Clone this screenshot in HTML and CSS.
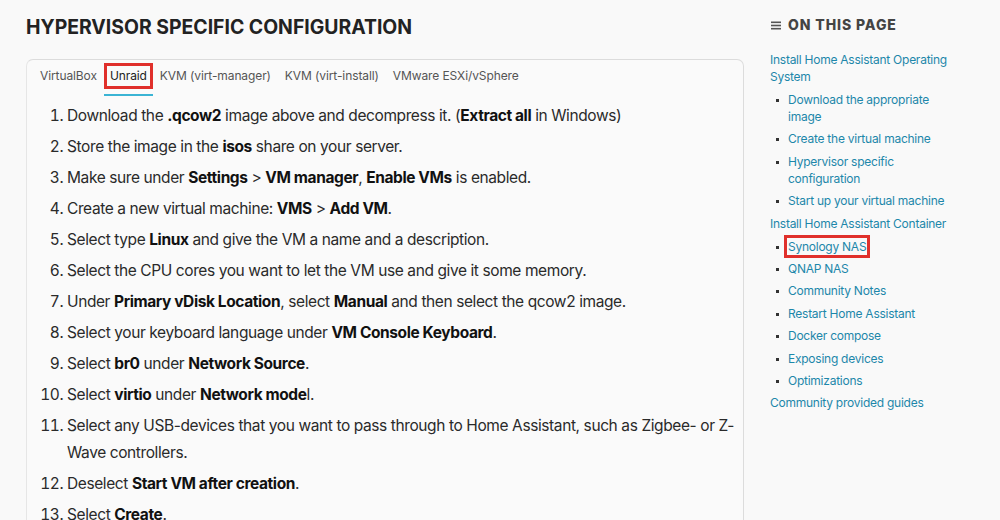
FILE: index.html
```html
<!DOCTYPE html>
<html lang="en">
<head>
<meta charset="utf-8">
<title>Hypervisor specific configuration</title>
<link rel="stylesheet" href="styles.css">
</head>
<body>
<div class="page">
  <main class="main">
    <h1 class="title">Hypervisor specific configuration</h1>
    <div class="card">
      <div class="tabs">
        <span class="tab">VirtualBox</span>
        <span class="tab tab-active"><span class="tab-label">Unraid</span></span>
        <span class="tab">KVM (virt-manager)</span>
        <span class="tab">KVM (virt-install)</span>
        <span class="tab">VMware ESXi/vSphere</span>
      </div>
      <ol class="steps">
        <li>Download the <b>.qcow2</b> image above and decompress it. (<b>Extract all</b> in Windows)</li>
        <li>Store the image in the <b>isos</b> share on your server.</li>
        <li>Make sure under <b>Settings</b> &gt; <b>VM manager</b>, <b>Enable VMs</b> is enabled.</li>
        <li>Create a new virtual machine: <b>VMS</b> &gt; <b>Add VM</b>.</li>
        <li>Select type <b>Linux</b> and give the VM a name and a description.</li>
        <li>Select the CPU cores you want to let the VM use and give it some memory.</li>
        <li>Under <b>Primary vDisk Location</b>, select <b>Manual</b> and then select the qcow2 image.</li>
        <li>Select your keyboard language under <b>VM Console Keyboard</b>.</li>
        <li>Select <b>br0</b> under <b>Network Source</b>.</li>
        <li>Select <b>virtio</b> under <b>Network mode</b>l.</li>
        <li>Select any USB-devices that you want to pass through to Home Assistant, such as Zigbee- or Z-Wave controllers.</li>
        <li>Deselect <b>Start VM after creation</b>.</li>
        <li>Select <b>Create</b>.</li>
      </ol>
    </div>
  </main>
  <aside class="toc">
    <div class="toc-title">
      <svg class="toc-icon" width="10" height="9" viewBox="0 0 10 9"><rect x="0" y="0.5" width="10" height="1.6" fill="#555"/><rect x="0" y="3.7" width="10" height="1.6" fill="#555"/><rect x="0" y="6.9" width="10" height="1.6" fill="#555"/></svg>
      <span>On this page</span>
    </div>
    <ul class="toc-list">
      <li><a href="#">Install Home Assistant Operating System</a>
        <ul class="toc-sub">
          <li><a href="#">Download the appropriate image</a></li>
          <li><a href="#">Create the virtual machine</a></li>
          <li><a href="#">Hypervisor specific configuration</a></li>
          <li><a href="#">Start up your virtual machine</a></li>
        </ul>
      </li>
      <li><a href="#">Install Home Assistant Container</a>
        <ul class="toc-sub">
          <li><a href="#" class="marked">Synology NAS</a></li>
          <li><a href="#">QNAP NAS</a></li>
          <li><a href="#">Community Notes</a></li>
          <li><a href="#">Restart Home Assistant</a></li>
          <li><a href="#">Docker compose</a></li>
          <li><a href="#">Exposing devices</a></li>
          <li><a href="#">Optimizations</a></li>
        </ul>
      </li>
      <li><a href="#">Community provided guides</a></li>
    </ul>
  </aside>
</div>
</body>
</html>
```

FILE: styles.css
```css
html, body {
  margin: 0;
  padding: 0;
  background: #f9f9f9;
}
body {
  font-family: Inter, "Noto Sans", sans-serif;
  color: #222;
  overflow: hidden;
  height: 520px;
}
.page {
  display: flex;
  align-items: flex-start;
}
.main {
  width: 718px;
  padding-left: 26px;
  padding-top: 15px;
  flex: none;
}
.title {
  margin: 0 0 20px 0;
  font-size: 19.4px;
  font-weight: 700;
  letter-spacing: 0;
  text-transform: uppercase;
  color: #222;
  line-height: 24px;
}
.card {
  border: 1px solid #dcdcdc;
  border-left-color: #e6e6e6;
  border-radius: 7px;
  background: #fafafa;
}
.tabs {
  display: flex;
  padding: 0 6px;
  font-size: 12px;
  letter-spacing: -0.1px;
  color: #555;
}
.tab {
  padding: 8px 7px 0 7px;
  height: 27px;
  line-height: 16px;
  white-space: nowrap;
}
.tab-active {
  padding: 3px 0 0 0;
  height: 31px;
  border-bottom: 2px solid #3bb4d4;
  color: #222;
}
.tab-label {
  display: inline-block;
  border: 3px solid #e0302b;
  padding: 2px 3px;
  line-height: 16px;
}
.steps {
  margin: 6px 0 0 0;
  padding: 0 4px 0 40px;
  font-size: 15.5px;
  letter-spacing: -0.4px;
  line-height: 27px;
  color: #2a2a2a;
}
.steps li {
  margin-bottom: 4px;
}
.steps b {
  font-weight: 700;
  color: #111;
}
.toc {
  margin-left: 26px;
  width: 190px;
  padding-top: 16px;
  flex: none;
}
.toc-title {
  display: flex;
  align-items: center;
  gap: 7px;
  font-size: 14px;
  font-weight: 800;
  letter-spacing: 0.9px;
  text-transform: uppercase;
  color: #444;
  line-height: 18px;
  margin-bottom: 17px;
}
.toc-icon {
  margin-left: 1px;
}
.toc-list, .toc-sub {
  list-style: none;
  margin: 0;
  padding: 0;
  font-size: 12px;
  letter-spacing: -0.25px;
  line-height: 17px;
}
.toc-list > li {
  margin-bottom: 5px;
}
.toc-sub {
  margin-top: 6px;
}
.toc-sub li {
  position: relative;
  padding-left: 18px;
  margin-bottom: 5.4px;
}
.toc-sub li::before {
  content: "";
  position: absolute;
  left: 6px;
  top: 8px;
  width: 3px;
  height: 3px;
  background: #333;
}
.toc a {
  color: #1d87aa;
  text-decoration: none;
}
.toc a.marked {
  outline: 3px solid #e0302b;
  outline-offset: 1px;
}
```
